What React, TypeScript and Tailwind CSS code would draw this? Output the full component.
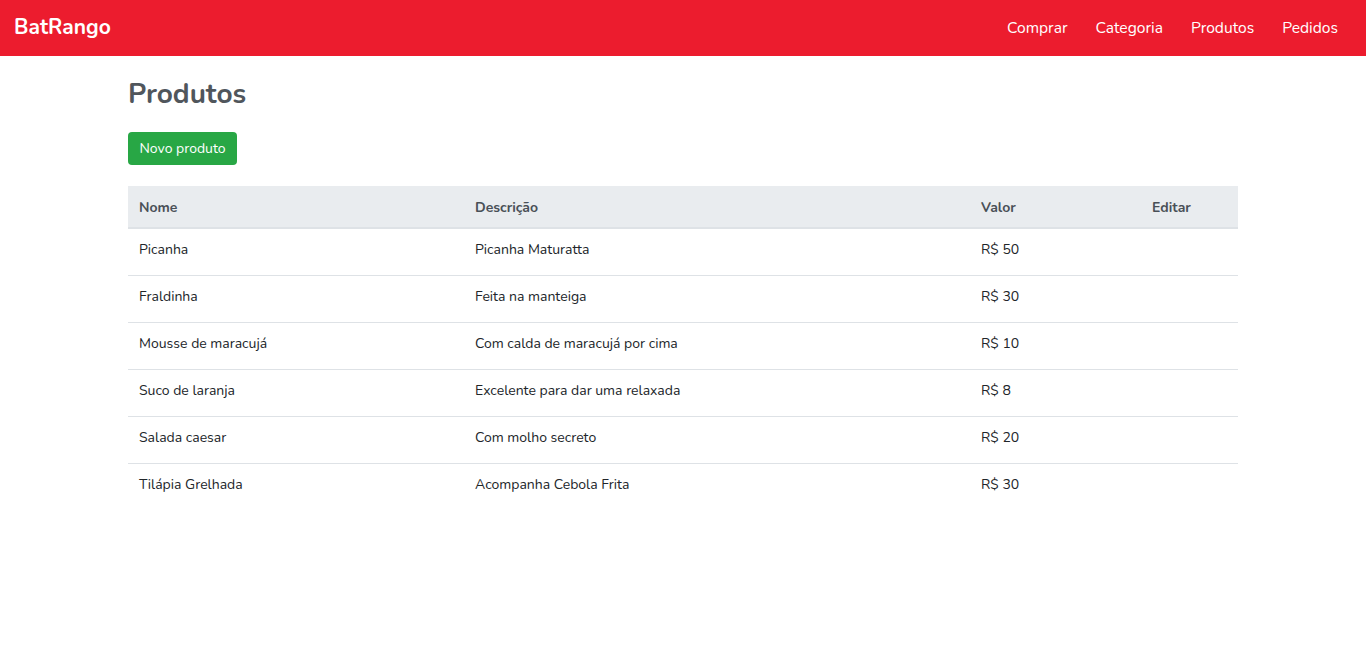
const PRODUTOS = [
  { nome: "Picanha", descricao: "Picanha Maturatta", valor: 50 },
  { nome: "Fraldinha", descricao: "Feita na manteiga", valor: 30 },
  { nome: "Mousse de maracujá", descricao: "Com calda de maracujá por cima", valor: 10 },
  { nome: "Suco de laranja", descricao: "Excelente para dar uma relaxada", valor: 8 },
  { nome: "Salada caesar", descricao: "Com molho secreto", valor: 20 },
  { nome: "Tilápia Grelhada", descricao: "Acompanha Cebola Frita", valor: 30 },
];

const LINKS = ["Comprar", "Categoria", "Produtos", "Pedidos"];

export default function App() {
  return (
    <div className="min-h-screen bg-white font-['Nunito','Lato','Noto_Sans',sans-serif] text-[#212529]">
      <nav className="flex h-14 items-center justify-between bg-[#ec1c2e] pl-[14px] pr-[28px]">
        <a className="text-[21px] font-bold text-white">BatRango</a>
        <ul className="flex items-center gap-[28px]">
          {LINKS.map((l) => (
            <li key={l}>
              <a className="text-[15.6px] text-white">{l}</a>
            </li>
          ))}
        </ul>
      </nav>

      <main className="mx-auto w-[1110px]">
        <h1 className="mt-[21px] text-[28px] font-bold leading-[34px] text-[#50565c]">Produtos</h1>

        <button className="mt-[21px] h-[33px] rounded bg-[#28a745] px-[11.5px] text-[14px] text-white">
          Novo produto
        </button>

        <table className="mt-[21px] w-full border-collapse text-left text-[14px]">
          <thead>
            <tr className="h-[42px] border-b-2 border-[#dee2e6] bg-[#e9ecef] text-[#495057]">
              <th className="w-[336px] px-[11px] pt-[2px] font-bold">Nome</th>
              <th className="w-[506px] px-[11px] pt-[2px] font-bold">Descrição</th>
              <th className="w-[171px] px-[11px] pt-[2px] font-bold">Valor</th>
              <th className="px-[11px] pt-[2px] font-bold">Editar</th>
            </tr>
          </thead>
          <tbody>
            {PRODUTOS.map((p, i) => (
              <tr key={p.nome} className={`h-[47px] ${i > 0 ? "border-t border-[#dee2e6]" : ""}`}>
                <td className="px-[11px] pb-[4px]">{p.nome}</td>
                <td className="px-[11px] pb-[4px]">{p.descricao}</td>
                <td className="px-[11px] pb-[4px]">R$ {p.valor}</td>
                <td className="px-[11px] pb-[4px]"></td>
              </tr>
            ))}
          </tbody>
        </table>
      </main>
    </div>
  );
}
